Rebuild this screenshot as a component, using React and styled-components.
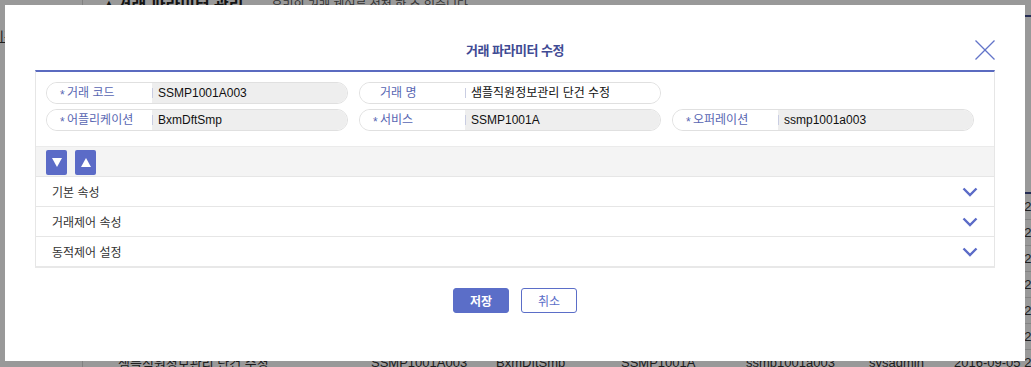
import React from 'react'
import styled, { createGlobalStyle } from 'styled-components'

const GlobalStyle = createGlobalStyle`
  html, body {
    margin: 0;
    padding: 0;
    width: 1031px;
    height: 367px;
    overflow: hidden;
    font-family: "Liberation Sans", "Noto Sans CJK KR", sans-serif;
    font-size: 12px;
    color: #333;
  }
`

const Page = styled.div`
  display: flex;
  width: 1031px;
  height: 367px;
  background: #fff;
  overflow: hidden;
`

const Sidebar = styled.div`
  width: 82px;
  flex: none;
  border-right: 1px solid #d8d8d8;
  padding-top: 26px;
  font-size: 13px;
  color: #333;
  text-indent: -8px;
  text-decoration: underline;
  white-space: nowrap;
`

const Main = styled.div`
  flex: 1;
  display: flex;
  flex-direction: column;
  padding-left: 18px;
  white-space: nowrap;
`

const PageHeader = styled.div`
  display: flex;
  align-items: baseline;
  gap: 28px;
  height: 25px;
  margin-top: -14px;
  padding-top: 5px;
  border-bottom: 2px solid #3c4a8a;
`

const PageTitle = styled.h2`
  margin: 0;
  font-size: 16px;
  font-weight: bold;
  color: #222;
`

const PageDesc = styled.span`
  font-size: 12px;
  color: #555;
`

const Table = styled.div`
  margin-top: 175px;
  border-top: 2px solid #3c4a8a;
`

const TableRow = styled.div`
  display: grid;
  grid-template-columns: 253px 125px 125px 125px 123px 85px 200px;
  height: 25px;
  padding-left: 17px;
  align-items: center;
  border-bottom: 1px solid #ddd;
  font-size: 13px;
  color: #333;
`

const Overlay = styled.div`
  position: fixed;
  inset: 0;
  background: rgba(0, 0, 0, 0.4);
`

const Modal = styled.div`
  position: fixed;
  top: 5px;
  left: 5px;
  width: 1020px;
  height: 356px;
  background: #fff;
  display: flex;
  flex-direction: column;
  align-items: center;
`

const ModalHeader = styled.div`
  position: relative;
  width: 960px;
  height: 65px;
  display: flex;
  justify-content: center;
  align-items: flex-end;
  padding-bottom: 10px;
  box-sizing: border-box;
`

const ModalTitle = styled.h3`
  margin: 0;
  font-size: 13px;
  line-height: 18px;
  font-weight: bold;
  letter-spacing: -0.5px;
  color: #3f4b94;
`

const CloseButton = styled.button`
  position: absolute;
  right: 0;
  top: 35px;
  width: 20px;
  height: 20px;
  padding: 0;
  border: none;
  background: none;
  cursor: pointer;
  display: flex;
`

const Panel = styled.div`
  width: 960px;
  box-sizing: border-box;
  border-top: 2px solid #5b6bc0;
  border-left: 1px solid #e6e6e6;
  border-right: 1px solid #e6e6e6;
  border-bottom: 2px solid #e8e8e8;
`

const FieldGrid = styled.div`
  display: grid;
  grid-template-columns: repeat(3, 302px);
  column-gap: 11px;
  row-gap: 5px;
  padding: 10px 10px 15px;
`

const Field = styled.div`
  display: flex;
  height: 22px;
  box-sizing: border-box;
  border: 1px solid #e0e0e0;
  border-radius: 11px;
  overflow: hidden;
  font-size: 12px;
  line-height: 20px;
`

const Label = styled.div`
  width: 92px;
  flex: none;
  padding-left: 13px;
  background: #fff;
  color: #5866b2;
  display: flex;
  align-items: center;
`

const Star = styled.span`
  width: 7px;
  font-size: 12px;
  color: #5866b2;
  transform: translateY(2px);
  visibility: ${p => (p.$show ? 'visible' : 'hidden')};
`

const Value = styled.div`
  position: relative;
  flex: 1;
  padding-left: 6px;
  background: ${p => (p.$disabled ? '#eeeeee' : '#fff')};
  color: #111;

  &::before {
    content: '';
    position: absolute;
    left: 0;
    top: 5px;
    bottom: 5px;
    width: 1px;
    background: #c9cde2;
  }
`

const ToolBar = styled.div`
  display: flex;
  gap: 8px;
  height: 30px;
  padding: 3px 10px 0;
  box-sizing: border-box;
  background: #f4f4f4;
  border-top: 1px solid #ebebeb;
`

const SquareButton = styled.button`
  width: 21px;
  height: 25px;
  padding: 0;
  border: none;
  border-radius: 2px;
  background: #5b6bc7;
  display: flex;
  align-items: center;
  justify-content: center;
  cursor: pointer;
`

const AccordionRow = styled.div`
  display: flex;
  align-items: center;
  justify-content: space-between;
  height: 29px;
  padding: 0 16px;
  border-top: 1px solid #e6e6e6;
  font-size: 12px;
  color: #333;

  &:first-of-type {
    border-top: none;
  }
`

const Footer = styled.div`
  display: flex;
  gap: 12px;
  margin-top: 20px;
`

const Button = styled.button`
  width: 56px;
  height: 25px;
  box-sizing: border-box;
  border-radius: 3px;
  border: 1px solid #5b6ec8;
  background: ${p => (p.$primary ? '#5b6ec8' : '#fff')};
  color: ${p => (p.$primary ? '#fff' : '#5b6ec8')};
  font-family: "Liberation Sans", "Noto Sans CJK KR", sans-serif;
  font-size: 12px;
  font-weight: ${p => (p.$primary ? 'bold' : 'normal')};
  cursor: pointer;
`

const Chevron = () => (
  <svg width="16" height="10" viewBox="0 0 16 10">
    <polyline points="1.5,1.5 8,8 14.5,1.5" fill="none" stroke="#5b6bc7" strokeWidth="2.4" />
  </svg>
)

const fields = [
  { label: '거래 코드', value: 'SSMP1001A003', required: true, disabled: true },
  { label: '거래 명', value: '샘플직원정보관리 단건 수정', required: false, disabled: false },
  null,
  { label: '어플리케이션', value: 'BxmDftSmp', required: true, disabled: true },
  { label: '서비스', value: 'SSMP1001A', required: true, disabled: true },
  { label: '오퍼레이션', value: 'ssmp1001a003', required: true, disabled: true },
]

const sections = ['기본 속성', '거래제어 속성', '동적제어 설정']

const bgRows = ['20:0', '20:0', '20:5', '20:5', '20:2', '20:2', '20:2']

const App = () => (
  <>
    <GlobalStyle />
    <Page>
      <Sidebar>기관</Sidebar>
      <Main>
        <PageHeader>
          <PageTitle>▲거래 파라미터 관리</PageTitle>
          <PageDesc>우리의 거래 제어를 설정 할 수 있습니다.</PageDesc>
        </PageHeader>
        <Table>
          {bgRows.map((t, i) => (
            <TableRow key={i}>
              <span>샘플직원정보관리 단건 수정</span>
              <span>SSMP1001A003</span>
              <span>BxmDftSmp</span>
              <span>SSMP1001A</span>
              <span>ssmp1001a003</span>
              <span>sysadmin</span>
              <span>2016-09-05 {t}0:11</span>
            </TableRow>
          ))}
        </Table>
      </Main>
    </Page>
    <Overlay />
    <Modal>
      <ModalHeader>
        <ModalTitle>거래 파라미터 수정</ModalTitle>
        <CloseButton aria-label="닫기">
          <svg width="20" height="20" viewBox="0 0 20 20">
            <line x1="0.5" y1="0.5" x2="19.5" y2="19.5" stroke="#6374c9" strokeWidth="1.2" />
            <line x1="19.5" y1="0.5" x2="0.5" y2="19.5" stroke="#6374c9" strokeWidth="1.2" />
          </svg>
        </CloseButton>
      </ModalHeader>
      <Panel>
        <FieldGrid>
          {fields.map((f, i) =>
            f ? (
              <Field key={i}>
                <Label>
                  <Star $show={f.required}>*</Star>
                  {f.label}
                </Label>
                <Value $disabled={f.disabled}>{f.value}</Value>
              </Field>
            ) : (
              <div key={i} />
            )
          )}
        </FieldGrid>
        <ToolBar>
          <SquareButton aria-label="모두 펼치기">
            <svg width="10" height="9" viewBox="0 0 10 9">
              <polygon points="0,0 10,0 5,9" fill="#fff" />
            </svg>
          </SquareButton>
          <SquareButton aria-label="모두 접기">
            <svg width="10" height="9" viewBox="0 0 10 9">
              <polygon points="0,9 10,9 5,0" fill="#fff" />
            </svg>
          </SquareButton>
        </ToolBar>
        {sections.map(s => (
          <AccordionRow key={s}>
            <span>{s}</span>
            <Chevron />
          </AccordionRow>
        ))}
      </Panel>
      <Footer>
        <Button $primary>저장</Button>
        <Button>취소</Button>
      </Footer>
    </Modal>
  </>
)

export default App
